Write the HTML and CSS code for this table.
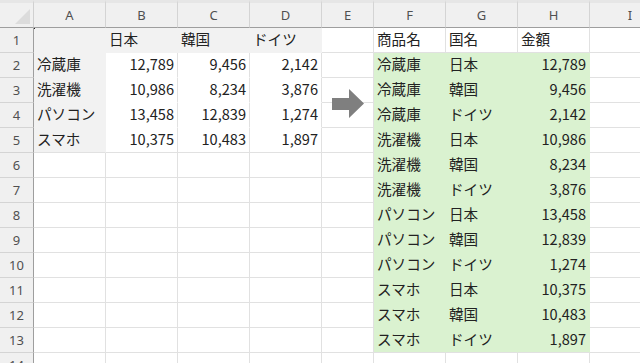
FILE: index.html
```html
<!DOCTYPE html>
<html lang="ja">
<head>
<meta charset="utf-8">
<link rel="stylesheet" href="styles.css">
</head>
<body>
<div class="sheet">
  <div class="grid">
    <div class="corner"><span class="tri"></span></div>
    <div class="ch">A</div><div class="ch">B</div><div class="ch">C</div><div class="ch">D</div><div class="ch">E</div><div class="ch">F</div><div class="ch">G</div><div class="ch">H</div><div class="ch last">I</div>

    <div class="rh">1</div>
    <div class="c g"></div><div class="c g">日本</div><div class="c g">韓国</div><div class="c g">ドイツ</div>
    <div class="c"></div><div class="c">商品名</div><div class="c">国名</div><div class="c">金額</div><div class="c"></div>

    <div class="rh">2</div>
    <div class="c g">冷蔵庫</div><div class="c v n">12,789</div><div class="c v n">9,456</div><div class="c v n">2,142</div>
    <div class="c"></div><div class="c gr">冷蔵庫</div><div class="c gr">日本</div><div class="c gr n">12,789</div><div class="c"></div>

    <div class="rh">3</div>
    <div class="c g">洗濯機</div><div class="c v n">10,986</div><div class="c v n">8,234</div><div class="c v n">3,876</div>
    <div class="c"></div><div class="c gr">冷蔵庫</div><div class="c gr">韓国</div><div class="c gr n">9,456</div><div class="c"></div>

    <div class="rh">4</div>
    <div class="c g">パソコン</div><div class="c v n">13,458</div><div class="c v n">12,839</div><div class="c v n">1,274</div>
    <div class="c"></div><div class="c gr">冷蔵庫</div><div class="c gr">ドイツ</div><div class="c gr n">2,142</div><div class="c"></div>

    <div class="rh">5</div>
    <div class="c g b">スマホ</div><div class="c v b n">10,375</div><div class="c v b n">10,483</div><div class="c v b n">1,897</div>
    <div class="c"></div><div class="c gr">洗濯機</div><div class="c gr">日本</div><div class="c gr n">10,986</div><div class="c"></div>

    <div class="rh">6</div>
    <div class="c"></div><div class="c"></div><div class="c"></div><div class="c"></div>
    <div class="c"></div><div class="c gr">洗濯機</div><div class="c gr">韓国</div><div class="c gr n">8,234</div><div class="c"></div>

    <div class="rh">7</div>
    <div class="c"></div><div class="c"></div><div class="c"></div><div class="c"></div>
    <div class="c"></div><div class="c gr">洗濯機</div><div class="c gr">ドイツ</div><div class="c gr n">3,876</div><div class="c"></div>

    <div class="rh">8</div>
    <div class="c"></div><div class="c"></div><div class="c"></div><div class="c"></div>
    <div class="c"></div><div class="c gr">パソコン</div><div class="c gr">日本</div><div class="c gr n">13,458</div><div class="c"></div>

    <div class="rh">9</div>
    <div class="c"></div><div class="c"></div><div class="c"></div><div class="c"></div>
    <div class="c"></div><div class="c gr">パソコン</div><div class="c gr">韓国</div><div class="c gr n">12,839</div><div class="c"></div>

    <div class="rh">10</div>
    <div class="c"></div><div class="c"></div><div class="c"></div><div class="c"></div>
    <div class="c"></div><div class="c gr">パソコン</div><div class="c gr">ドイツ</div><div class="c gr n">1,274</div><div class="c"></div>

    <div class="rh">11</div>
    <div class="c"></div><div class="c"></div><div class="c"></div><div class="c"></div>
    <div class="c"></div><div class="c gr">スマホ</div><div class="c gr">日本</div><div class="c gr n">10,375</div><div class="c"></div>

    <div class="rh">12</div>
    <div class="c"></div><div class="c"></div><div class="c"></div><div class="c"></div>
    <div class="c"></div><div class="c gr">スマホ</div><div class="c gr">韓国</div><div class="c gr n">10,483</div><div class="c"></div>

    <div class="rh">13</div>
    <div class="c"></div><div class="c"></div><div class="c"></div><div class="c"></div>
    <div class="c"></div><div class="c gr b">スマホ</div><div class="c gr b">ドイツ</div><div class="c gr b n">1,897</div><div class="c"></div>

    <div class="rh">14</div>
    <div class="c"></div><div class="c"></div><div class="c"></div><div class="c"></div>
    <div class="c"></div><div class="c"></div><div class="c"></div><div class="c"></div><div class="c"></div>
  </div>
  <svg class="arrow" width="32" height="30" viewBox="0 0 32 30" aria-hidden="true">
    <polygon points="0,9 17,9 17,0 32,14.5 17,29 17,21 0,21" fill="#7f7f7f"/>
  </svg>
  <span class="sel-dot"></span>
</div>
</body>
</html>
```

FILE: styles.css
```css
html, body {
  margin: 0;
  padding: 0;
  background: #ffffff;
}

.sheet {
  position: relative;
  width: 640px;
  height: 363px;
  overflow: hidden;
}

.grid {
  display: grid;
  grid-template-columns: 34px 72px 72px 72px 72px 52px 72px 72px 72px 80px;
  grid-template-rows: 28px repeat(13, 25px) 25px;
  font-family: "Noto Sans CJK JP", "Noto Sans", sans-serif;
  font-size: 14.6px;
  color: #222222;
}

.corner {
  position: relative;
  background: #f0f0f0;
  border-top: 3px solid #e6e6e6;
  border-right: 1px solid #d0d0d0;
  border-bottom: 1px solid #9e9e9e;
  box-sizing: border-box;
}

.tri {
  position: absolute;
  right: 3px;
  bottom: 3px;
  width: 0;
  height: 0;
  border-left: 15px solid transparent;
  border-bottom: 15px solid #dcdcdc;
}

.ch {
  box-sizing: border-box;
  background: #f0f0f0;
  border-top: 3px solid #e6e6e6;
  border-right: 1px solid #d4d4d4;
  border-bottom: 1px solid #9e9e9e;
  font-family: "Noto Sans", sans-serif;
  font-size: 13px;
  color: #505050;
  display: flex;
  align-items: center;
  justify-content: center;
  padding-bottom: 1px;
}

.ch.last {
  border-right: none;
}

.rh {
  box-sizing: border-box;
  background: #f0f0f0;
  border-right: 1px solid #9e9e9e;
  border-bottom: 1px solid #d4d4d4;
  font-family: "Noto Sans", sans-serif;
  font-size: 13px;
  color: #505050;
  display: flex;
  align-items: center;
  justify-content: center;
}

.c {
  box-sizing: border-box;
  border-right: 1px solid #e1e1e1;
  border-bottom: 1px solid #e1e1e1;
  padding: 0 3px 1px 3px;
  display: flex;
  align-items: center;
  white-space: nowrap;
  overflow: hidden;
  line-height: 1;
}

.n {
  justify-content: flex-end;
}

.g {
  background: #f2f2f2;
  border-color: #f2f2f2;
}

.v {
  border-bottom-color: #ffffff;
}

.gr {
  background: #daf2d0;
  border-color: #daf2d0;
}

.b {
  border-bottom-color: #e1e1e1;
}

.arrow {
  position: absolute;
  left: 332px;
  top: 89px;
}

.sel-dot {
  position: absolute;
  left: 34px;
  top: 28px;
  width: 1px;
  height: 1px;
  background: #222222;
}
```
